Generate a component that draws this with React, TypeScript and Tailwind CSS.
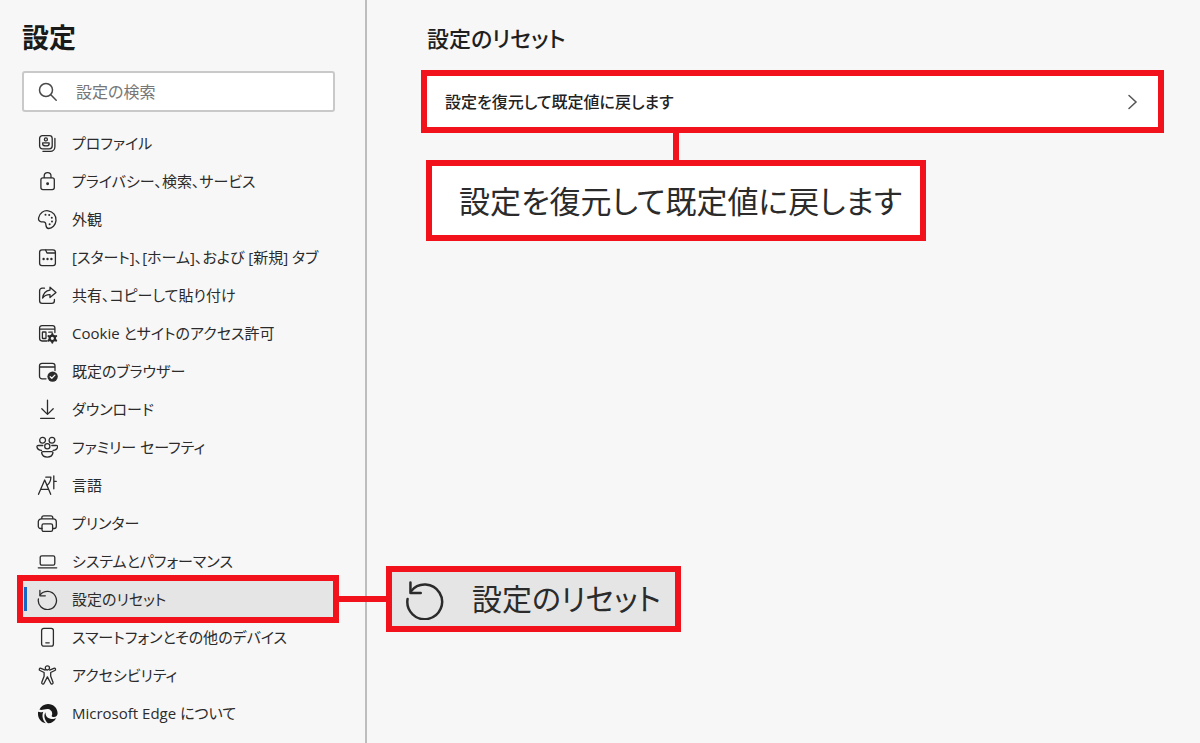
import type { ReactNode } from "react";

function Icon({ children, className = "size-[22px]" }: { children: ReactNode; className?: string }) {
  return (
    <svg
      viewBox="-1 -1 22 22"
      fill="none"
      stroke="currentColor"
      strokeWidth="1.3"
      strokeLinecap="round"
      strokeLinejoin="round"
      aria-hidden="true"
      className={`shrink-0 ${className}`}
    >
      {children}
    </svg>
  );
}

const resetPath = (
  <>
    <path d="M1.4 10A9.1 9.1 0 1 0 3.2 5.9" />
    <path d="M2.9 1.4v5.4h5.4" />
  </>
);

const items = [
  {
    label: "プロファイル",
    icon: (
      <>
        <rect x="2.6" y="2.6" width="12.6" height="13.2" rx="2.8" />
        <path d="M17.9 5.4v8.4a4.6 4.6 0 0 1-4.6 4.6H6" />
        <circle cx="8.9" cy="6.4" r="1.5" />
        <path d="M5.7 9.8h6.4v1.1c0 1.2-1.4 2-3.2 2s-3.2-.8-3.2-2z" />
      </>
    ),
  },
  {
    label: "プライバシー、検索、サービス",
    icon: (
      <>
        <rect x="3.9" y="6.8" width="13.4" height="11.8" rx="2" />
        <path d="M7.2 6.6V5a3.4 3.4 0 0 1 6.8 0v1.6" />
        <circle cx="10.6" cy="12.7" r=".8" fill="currentColor" />
      </>
    ),
  },
  {
    label: "外観",
    icon: (
      <>
        <path d="M1.6 8.8C2.7 4 6.700 1.2 11.2 1.8c4.9.7 8.300 5 7.800 9.800-.4 4.500-3.900 7.900-7.300 7.900-3.700 0-2.200-3.800-3.300-5.600-1-1.600-2.600-.6-4.200-1.100-1.900-.5-3-1.900-2.600-4z" />
        <g fill="currentColor" stroke="none">
          <circle cx="8.5" cy="5.8" r="1" />
          <circle cx="12.2" cy="6" r="1" />
          <circle cx="14.8" cy="8.8" r="1" />
          <circle cx="15" cy="12.4" r="1" />
          <circle cx="12.6" cy="15.3" r="1" />
        </g>
      </>
    ),
  },
  {
    label: "[スタート]、[ホーム]、および [新規] タブ",
    icon: (
      <>
        <rect x="2.6" y="2.8" width="15.8" height="15.8" rx="2.4" />
        <path d="M8.6 3l1.4 3h8.2" />
        <g fill="currentColor" stroke="none">
          <circle cx="6.6" cy="12" r="1.2" />
          <circle cx="10.5" cy="12" r="1.2" />
          <circle cx="14.4" cy="12" r="1.2" />
        </g>
      </>
    ),
  },
  {
    label: "共有、コピーして貼り付け",
    icon: (
      <>
        <path d="M7.5 3.2H5.2a2.6 2.6 0 0 0-2.6 2.6v10a2.6 2.6 0 0 0 2.6 2.6h9.600a2.600 2.600 0 0 0 2.600-2.600v-1.400" />
        <path d="M13 2.2l6 5.2-6 5.2V9.7c-3.2-.2-5.6 1-7.4 3.4C6.2 8.6 8.6 5.6 13 5.1z" />
      </>
    ),
  },
  {
    label: "Cookie とサイトのアクセス許可",
    icon: (
      <>
        <path d="M10 18H5a2.4 2.4 0 0 1-2.4-2.4V5A2.4 2.4 0 0 1 5 2.6h10.5A2.4 2.4 0 0 1 17.900 5v4.500M2.800 6.200h15" />
        <rect x="5.4" y="9" width="3.6" height="6.5" rx=".6" />
        <path d="M11.8 9.2h3.5" />
        <circle cx="15.3" cy="15.3" r="2.7" strokeWidth="2.2" />
        <path
          d="M15.3 11v1M15.3 18.6v1M11.5 13.1l.9.5M18.2 17l.9.5M11.5 17.5l.9-.5M18.2 13.6l.9-.5"
          strokeWidth="2.2"
        />
      </>
    ),
  },
  {
    label: "既定のブラウザー",
    icon: (
      <>
        <path d="M9 17.8H5a2.5 2.5 0 0 1-2.5-2.5V4.8A2.5 2.5 0 0 1 5 2.3h10.5A2.5 2.5 0 0 1 18 4.800v4.700M2.700 6h15.200" />
        <circle cx="15.6" cy="15.6" r="5.2" fill="currentColor" stroke="none" />
        <path d="M13.2 15.8l1.6 1.5 3.1-3.2" stroke="#f7f7f7" />
      </>
    ),
  },
  {
    label: "ダウンロード",
    icon: <path d="M10.5 1.2v14M4.8 9.8l5.7 5.6 5.7-5.6M3.6 19.3h13.8" />,
  },
  {
    label: "ファミリー セーフティ",
    icon: (
      <>
        <circle cx="5.6" cy="3.2" r="2.9" />
        <circle cx="15" cy="3.2" r="2.9" />
        <circle cx="10.3" cy="9.3" r="2.6" />
        <path d="M5.8 8.5H1.5c-1.3 0-1.7.5-1.5 1.5.4 2 2.2 3.3 4.5 3.4M14.8 8.5h4.3c1.3 0 1.7.5 1.5 1.5-.4 2-2.2 3.3-4.5 3.4" />
        <path d="M5.9 14.6h8.8c1 0 1.4.5 1.2 1.4-.5 2.5-2.6 4.1-5.6 4.1s-5.1-1.6-5.6-4.1c-.2-.9.2-1.4 1.2-1.4z" />
      </>
    ),
  },
  {
    label: "言語",
    icon: (
      <>
        <path d="M1.5 19.3L7.7 5l6 14.3M3.6 14.3h8" />
        <path d="M8.8 2.2h5.1c-.2 3.8-1.5 6.2-3.6 7.8M16.8.8v13M16.9 6.3h2.4" />
      </>
    ),
  },
  {
    label: "プリンター",
    icon: (
      <>
        <path d="M5 15.5H3.500a2.200 2.200 0 0 1-2.200-2.200V8.800a3 3 0 0 1 3-3h12a3 3 0 0 1 3 3v4.500a2.200 2.200 0 0 1-2.200 2.200h-1.500" />
        <path d="M4.8 5.6v-.8a2 2 0 0 1 2-2h7a2 2 0 0 1 2 2v.8" />
        <rect x="5" y="10.8" width="10.6" height="7.6" rx="1.6" />
      </>
    ),
  },
  {
    label: "システムとパフォーマンス",
    icon: (
      <>
        <rect x="3.2" y="4.8" width="14.6" height="9.4" rx="1.6" />
        <path d="M1.3 16.8h18.4" />
      </>
    ),
  },
  { label: "設定のリセット", icon: resetPath, current: true },
  {
    label: "スマートフォンとその他のデバイス",
    icon: (
      <>
        <rect x="4.6" y="1.3" width="11.8" height="17.8" rx="2.2" />
        <path d="M8.8 15.8h3.4" />
      </>
    ),
  },
  {
    label: "アクセシビリティ",
    icon: (
      <>
        <circle cx="10.4" cy="2.9" r="2.1" />
        <path d="M8.2 5.1L4 3.3c-1.6-.6-2.5 1.5-1 2.2l4.1 2v3.8l-2.3 6c-.6 1.7 1.6 2.5 2.3 1l3.3-6.4 3.3 6.4c.7 1.5 2.9.7 2.3-1l-2.3-6V7.5l4.1-2c1.5-.7.6-2.8-1-2.2l-4.2 1.8" />
      </>
    ),
  },
  {
    label: "Microsoft Edge について",
    icon: (
      <g className="text-[#1a1a1a]">
        <path
          d="M2.4 6.6C4 3 7.300.900 11 .900c5.400 0 9.600 4.100 9.600 9.300 0 2.200-1.500 3.900-3.700 3.900-1.300 0-2.200-.4-2.200-1.100 0-.5.5-1 .5-2.200 0-2.600-2.100-4.700-5-4.700-3 0-5.400 1.500-7.800.5z"
          fill="currentColor"
          stroke="none"
        />
        <path
          d="M1.100 8.800c1.900.8 3.600.5 5.200-.1-1.700 3.900-.7 8.400 2.500 11.600C4.300 19.500 1 15.600 1 11c0-.8 0-1.500.1-2.200z"
          fill="currentColor"
          stroke="none"
        />
        <path
          d="M8.600 9.300c-.5 3.700 2.300 6.500 6 6.700 1.900.1 3.300-.4 4.600-1-1.600 3.300-4.800 5.500-8.200 5.300-3.400-2.700-4.800-8-2.400-11z"
          fill="currentColor"
          stroke="none"
        />
      </g>
    ),
  },
];

export default function App() {
  return (
    <div className="flex min-h-screen bg-[#f7f7f7] font-['Open_Sans','Noto_Sans_CJK_JP',sans-serif] text-[15px] leading-6 text-[#2b2b2b] [font-feature-settings:'palt']">
      <aside className="w-[367px] shrink-0 border-r-2 border-[#bdbdbd] pt-5 pr-[30px] pl-[22px]">
        <h1 className="text-[27px] leading-9 font-bold text-[#1a1a1a]">設定</h1>
        <label className="mt-[15px] flex h-[41px] items-center gap-[18px] rounded-[3px] border-2 border-[#c9c9c9] bg-white pl-[14px]">
          <svg
            viewBox="0 0 20 20"
            fill="none"
            stroke="#4a4a4a"
            strokeWidth="1.5"
            strokeLinecap="round"
            aria-hidden="true"
            className="size-5 shrink-0"
          >
            <circle cx="8" cy="8" r="6.5" />
            <path d="M12.8 12.8l5.4 5.4" />
          </svg>
          <input
            type="search"
            aria-label="設定の検索"
            placeholder="設定の検索"
            className="w-full bg-transparent text-base outline-none placeholder:text-[#777]"
          />
        </label>

        <nav className="mt-3">
          <ul>
            {items.map((item) => (
              <li key={item.label} className="relative">
                <a
                  href="#"
                  aria-current={item.current ? "page" : undefined}
                  className={`flex h-[38px] items-center gap-[14px] pl-[14px] whitespace-nowrap ${item.current ? "bg-[#e5e5e5]" : ""}`}
                >
                  <Icon>{item.icon}</Icon>
                  {item.label}
                </a>
                {item.current && <ResetCallout />}
              </li>
            ))}
          </ul>
        </nav>
      </aside>

      <main className="min-w-0 flex-1 pt-[22px] pr-9 pl-[54px]">
        <h2 className="pl-[6px] text-[22px] leading-8 font-medium text-[#1f1f1f]">設定のリセット</h2>
        <button
          type="button"
          className="mt-4 flex h-[63px] w-full items-center justify-between border-6 border-[#f1121c] bg-white pr-[18px] pl-[18px] text-base font-medium text-[#222]"
        >
          設定を復元して既定値に戻します
          <svg
            viewBox="0 0 16 16"
            fill="none"
            stroke="#555"
            strokeWidth="1.5"
            strokeLinecap="round"
            aria-hidden="true"
            className="size-4"
          >
            <path d="M5 1.5l7 6.5-7 6.5" />
          </svg>
        </button>
        {/* enlarged copy of the row above */}
        <div className="ml-[5px] w-[500px]">
          <div className="mx-auto h-[27px] w-[6px] bg-[#f1121c]" />
          <div className="flex h-[81px] items-center border-6 border-[#f1121c] bg-white pl-[27px] text-[31px] leading-10 whitespace-nowrap">
            設定を復元して既定値に戻します
          </div>
        </div>
      </main>
    </div>
  );
}

// red frame round the selected row, with the enlarged label beside it
function ResetCallout() {
  return (
    <div className="pointer-events-none absolute -inset-y-[5px] -right-1 -left-[5px] flex items-center border-6 border-[#f1121c] pl-[1px]">
      <div className="h-6 w-[3px] bg-[#1668c7]" />
      <div className="absolute left-full ml-[6px] flex items-center">
        <div className="h-[6px] w-[47px] bg-[#f1121c]" />
        <div className="flex h-[66px] w-[295px] items-center gap-[27px] border-6 border-[#f1121c] bg-[#e5e5e5] pl-[11px] text-[30px] leading-10 whitespace-nowrap">
          <Icon className="size-[42px]">{resetPath}</Icon>
          設定のリセット
        </div>
      </div>
    </div>
  );
}
